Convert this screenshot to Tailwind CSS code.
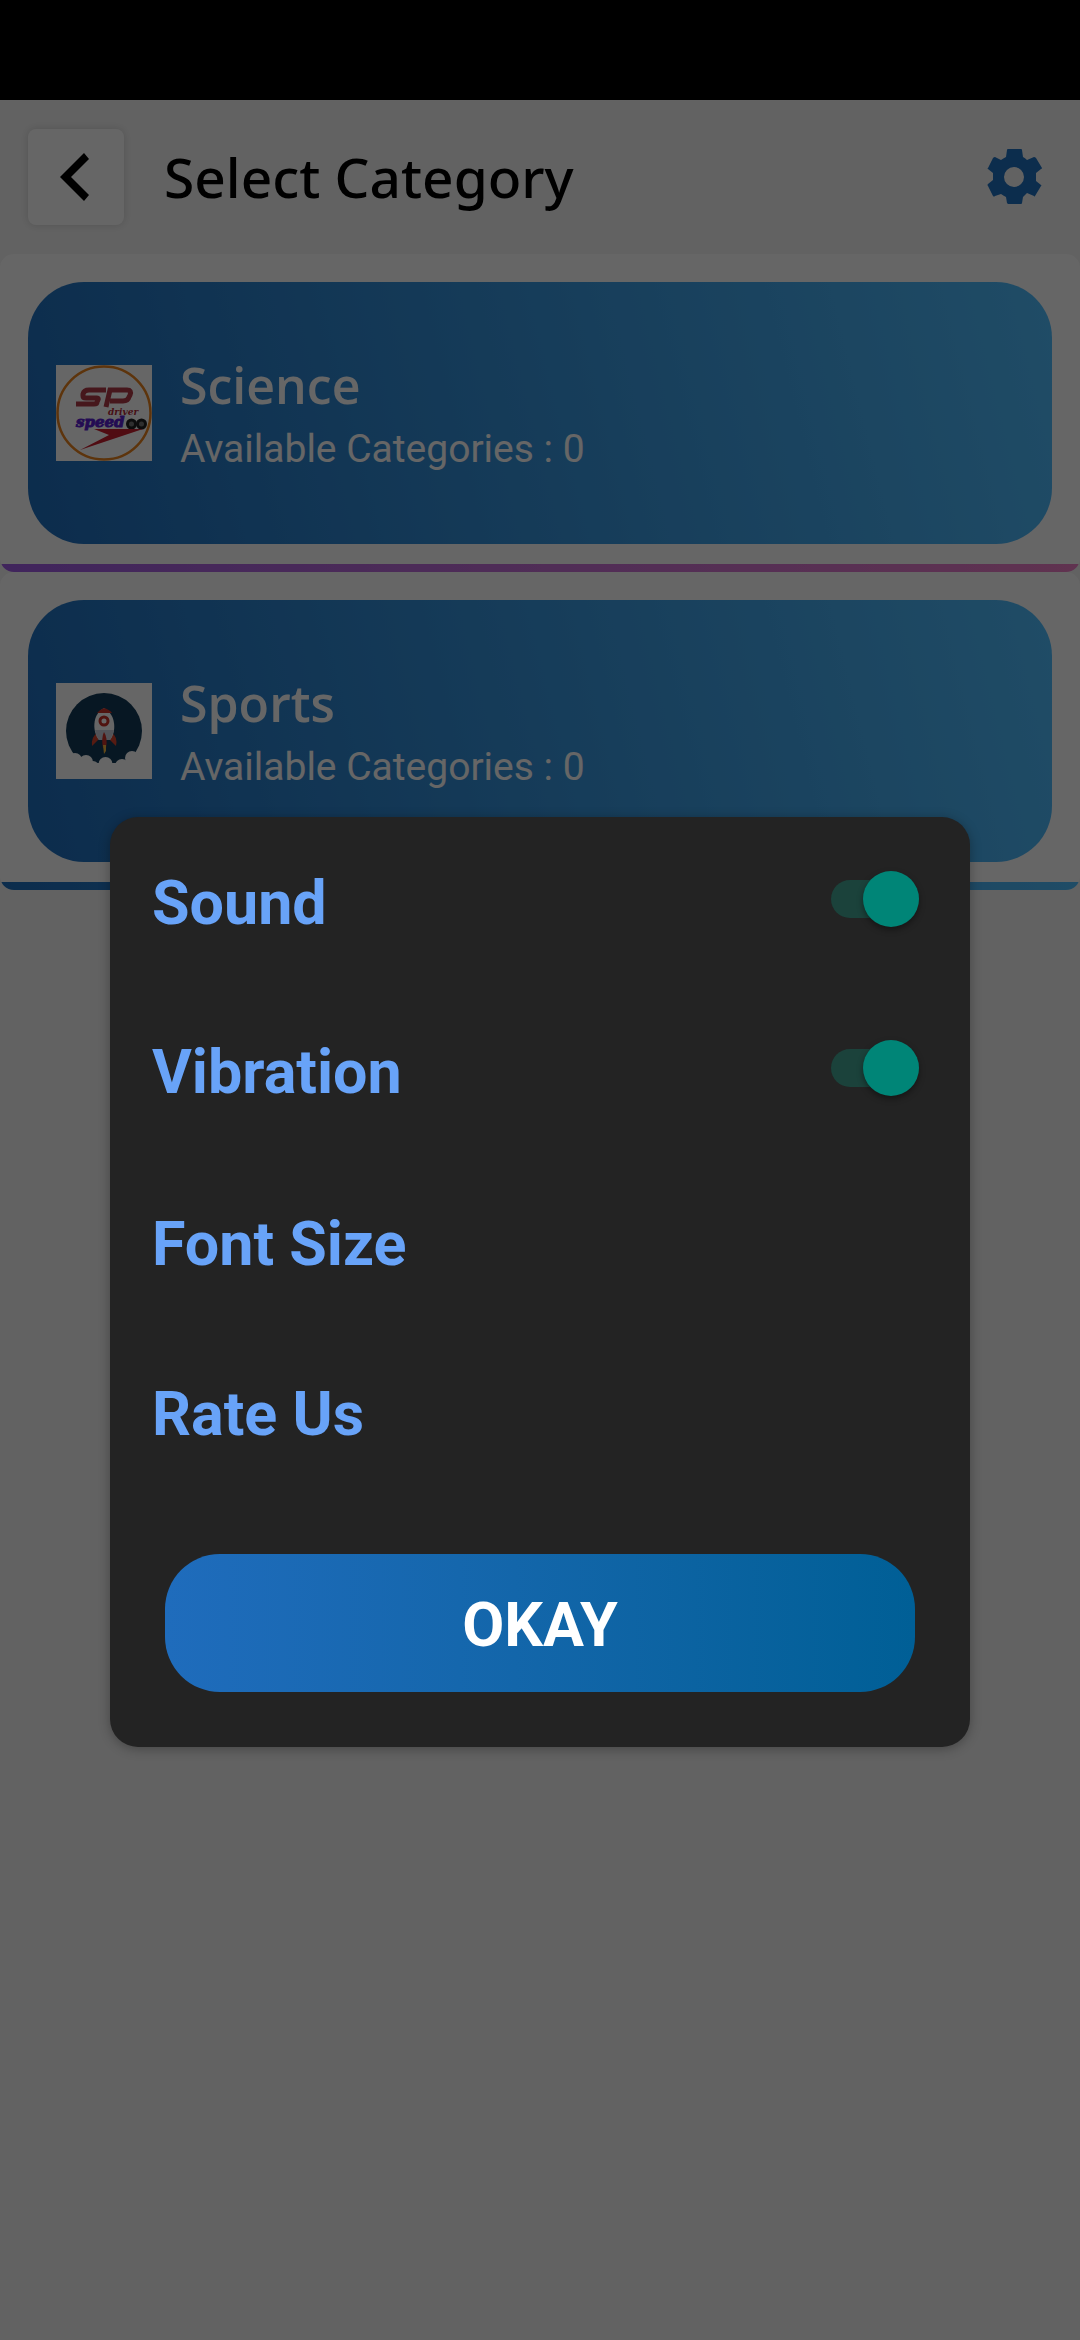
<!DOCTYPE html>
<html lang="en">
<head>
<meta charset="utf-8">
<meta name="viewport" content="width=device-width, initial-scale=1">
<title>Select Category</title>
<script src="https://cdn.jsdelivr.net/npm/@tailwindcss/browser@4"></script>
</head>
<body class="relative min-h-screen bg-[#f5f5f5] font-['Roboto',sans-serif]">
<div class="h-[100px] bg-black"></div>

<header class="flex h-[154px] items-center pl-7 pr-9">
  <button type="button" aria-label="Back" class="grid size-24 place-items-center rounded-lg bg-white shadow-[0_0_8px_rgba(0,0,0,0.15)]">
    <svg class="size-24" viewBox="0 0 96 96" aria-hidden="true"><path d="M56 24 61 30 43 48 61 66 56 72 32 48Z"/></svg>
  </button>
  <h1 class="ml-10 flex-1 pb-0.5 font-['Noto_Sans',sans-serif] text-[55px] font-medium leading-none">Select Category</h1>
  <button type="button" aria-label="Settings" class="text-[#1f70c0]">
    <svg class="size-[60px]" viewBox="0 0 60 60" fill="currentColor" aria-hidden="true"><path fill-rule="evenodd" d="M24 2H37Q38 2 38 3L39 10Q41 11 43 13L50 10Q51 10 52 11L58 21Q58 22 57 22L52 26V34L57 38Q58 38 57 39L51 49Q51 50 50 49L43 46Q41 48 39 50L38 56Q38 57 37 57H24Q24 57 23 56L22 50Q20 49 17 47L11 49Q10 50 9 49L4 39Q3 38 4 37L9 33V26L4 22Q3 22 4 21L9 11Q10 10 11 10L17 13Q20 11 22 10L23 3Q23 2 24 2ZM30 20A10 10 0 1 0 30 40 10 10 0 1 0 30 20Z"/></svg>
  </button>
</header>

<main>
  <a href="#science" class="block overflow-hidden rounded-[14px] bg-white">
    <div class="px-7 pt-7 pb-5">
      <div class="flex h-[262px] items-center gap-7 rounded-[56px] bg-[linear-gradient(76deg,#1f6fbf,#50beff)] px-7 text-white">
        <svg class="size-24 shrink-0" viewBox="0 0 96 96" role="img" aria-label="Speedoo logo">
          <rect width="96" height="96" fill="#fff"/>
          <circle cx="48" cy="48" r="46.500" fill="none" stroke="#e8821e" stroke-width="2.500"/>
          <path d="M50 25H33Q28 25 27 29V31Q27 33 30 33H41Q43 33 42 35L41 37Q41 39 38 39H20M50 42 54 25H71Q76 25 74 30L73 32Q72 36 67 36H54" fill="none" stroke="#b03a48" stroke-width="5"/>
          <text x="52" y="50" font-family="DejaVu Serif, serif" font-style="italic" font-weight="700" font-size="9" fill="#b02838">driver</text>
          <text x="20" y="62" font-family="DejaVu Serif, serif" font-style="italic" font-weight="700" font-size="15" fill="#5a1fd0" stroke="#5a1fd0">speed</text>
          <g fill="#777" stroke="#222" stroke-width="3"><circle cx="75.500" cy="59" r="4"/><circle cx="85.500" cy="59" r="4"/></g>
          <path d="M38 64H87L24 85 53 70Z" fill="#c81e2e"/>
        </svg>
        <div>
          <h2 class="font-['Open_Sans',sans-serif] text-[50px] font-semibold leading-[68px]">Science</h2>
          <p class="mt-1 text-[39px] leading-[52px]">Available Categories : 0</p>
        </div>
      </div>
    </div>
    <div class="h-2 bg-linear-to-r from-[#a05ce6] to-[#f07fc8]"></div>
  </a>
  <a href="#sports" class="block overflow-hidden rounded-[14px] bg-white">
    <div class="px-7 pt-7 pb-5">
      <div class="flex h-[262px] items-center gap-7 rounded-[56px] bg-[linear-gradient(76deg,#1f6fbf,#50beff)] px-7 text-white">
        <svg class="size-24 shrink-0" viewBox="0 0 96 96" role="img" aria-label="Rocket">
          <rect width="96" height="96" fill="#fff"/>
          <circle cx="48" cy="48" r="38" fill="#123a58"/>
          <g fill="#fff"><circle cx="19" cy="77" r="7"/><circle cx="30" cy="79" r="7"/><circle cx="37" cy="84" r="6"/><circle cx="49.500" cy="81" r="7"/><circle cx="66" cy="83" r="7"/><circle cx="76" cy="75" r="7"/><path d="M10 80H86V96H10Z"/></g>
          <path d="M41 50Q35 54 36 63L43 56ZM56 50Q62 54 60 63L53 56Z" fill="#d8452e"/>
          <path d="M48 25C35 32 37 50 43 57H54C60 50 61 32 48 25Z" fill="#fff"/>
          <path d="M39 47H58Q56 54 54 57H43Q40 53 39 47Z" fill="#ccd2de"/>
          <path d="M48 25Q43 27 41 30H56Q54 27 48 25Z" fill="#c8322a"/>
          <circle cx="48" cy="38" r="4" fill="#fff" stroke="#c8322a" stroke-width="3"/>
          <path d="M48 49Q45 55 47 65H50Q52 55 48 49Z" fill="#c8322a"/><path d="M47 62H50V68L48 71Z" fill="#f0b43c"/>
        </svg>
        <div>
          <h2 class="font-['Open_Sans',sans-serif] text-[50px] font-semibold leading-[68px]">Sports</h2>
          <p class="mt-1 text-[39px] leading-[52px]">Available Categories : 0</p>
        </div>
      </div>
    </div>
    <div class="h-2 bg-linear-to-r from-[#1f6fbf] to-[#50beff]"></div>
  </a>
</main>

<div class="absolute inset-0 flex flex-col items-center bg-black/60 px-[110px] pt-[817px]">
  <div role="dialog" aria-modal="true" aria-label="Settings" class="w-full overflow-hidden rounded-[28px] bg-[#232323] shadow-[0_2px_12px_rgba(0,0,0,0.3)]">
    <div class="flex h-[168px] items-center justify-between pl-[42px] pr-[51px]">
      <label for="sound" class="mt-1 text-[61px] font-bold leading-[72px] text-[#68a3f8]">Sound</label>
      <input id="sound" type="checkbox" role="switch" checked class="relative mb-1 h-[38px] w-[88px] appearance-none rounded-full bg-[#1b423b] after:absolute after:-top-[9px] after:right-0 after:size-14 after:rounded-full after:bg-[#008577] after:shadow-[0_3px_6px_rgba(0,0,0,0.4)] after:content-['']">
    </div>
    <div class="flex h-[170px] items-center justify-between pl-[42px] pr-[51px]">
      <label for="vibration" class="mt-1 text-[61px] font-bold leading-[72px] text-[#68a3f8]">Vibration</label>
      <input id="vibration" type="checkbox" role="switch" checked class="relative mb-1 h-[38px] w-[88px] appearance-none rounded-full bg-[#1b423b] after:absolute after:-top-[9px] after:right-0 after:size-14 after:rounded-full after:bg-[#008577] after:shadow-[0_3px_6px_rgba(0,0,0,0.4)] after:content-['']">
    </div>
    <button type="button" class="flex h-[170px] w-full items-center pt-2 pl-[42px] text-[61px] font-bold leading-[72px] text-[#68a3f8]">Font Size</button>
    <button type="button" class="flex h-[170px] w-full items-center pt-2 pl-[42px] text-[61px] font-bold leading-[72px] text-[#68a3f8]">Rate Us</button>
    <div class="px-[55px] pt-[59px] pb-[55px]">
      <button type="button" class="h-[138px] w-full rounded-[55px] bg-linear-to-r from-[#1f6cbc] to-[#005f96] pt-1 text-[61px] font-bold leading-[72px] text-white">OKAY</button>
    </div>
  </div>
</div>
</body>
</html>
